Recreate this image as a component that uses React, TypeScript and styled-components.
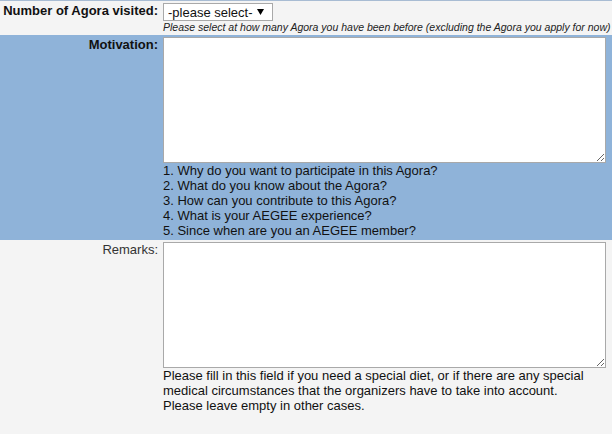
import React, { useState } from 'react';
import styled, { createGlobalStyle } from 'styled-components';

const GlobalStyle = createGlobalStyle`
    html, body {
        margin: 0;
        padding: 0;
        background: #f4f4f4;
    }
    body {
        font-family: "Liberation Sans", Arial, sans-serif;
        color: #111;
    }
`;

const StyledForm = styled.form`
    width: 612px;
    border-top: 1px solid #a8bcd3;
`;

const StyledRow = styled.div<{ $highlight?: boolean }>`
    display: grid;
    grid-template-columns: 158px 1fr;
    column-gap: 5px;
    padding: 1px 0 2px;
    background: ${(p) => (p.$highlight ? '#8fb3d9' : '#f4f4f4')};
`;

const StyledLabel = styled.label<{ $strong?: boolean }>`
    text-align: right;
    font-size: 13px;
    font-weight: ${(p) => (p.$strong ? 'bold' : 'normal')};
    color: ${(p) => (p.$strong ? '#111' : '#333')};
    padding-top: 1px;
    line-height: 16px;
    white-space: nowrap;
`;

const StyledField = styled.div`
    display: flex;
    flex-direction: column;
    align-items: flex-start;
    min-width: 0;
`;

const StyledSelect = styled.select`
    width: 110px;
    height: 18px;
    font-family: "Liberation Sans", Arial, sans-serif;
    font-size: 13px;
    color: #111;
    background: #fff;
    border: 1px solid #a9a9a9;
    padding: 0 4px;
    margin: 1px 0 0;
    appearance: none;
    background-image: url("data:image/svg+xml;utf8,<svg xmlns='http://www.w3.org/2000/svg' width='7' height='6'><path d='M0 0h7L3.5 6z' fill='black'/></svg>");
    background-repeat: no-repeat;
    background-position: right 8px center;
`;

const StyledHint = styled.div`
    font-size: 10.5px;
    font-style: italic;
    color: #222;
    line-height: 12px;
    white-space: nowrap;
`;

const StyledTextArea = styled.textarea`
    display: block;
    box-sizing: border-box;
    width: 443px;
    height: 126px;
    border: 1px solid #a9a9a9;
    background: #fff;
    font-family: "Liberation Sans", Arial, sans-serif;
    font-size: 13px;
    margin: 1px 0 0;
`;

const StyledNotes = styled.div`
    font-size: 13px;
    line-height: 15px;
    color: #111;
`;

const questions = [
    '1. Why do you want to participate in this Agora?',
    '2. What do you know about the Agora?',
    '3. How can you contribute to this Agora?',
    '4. What is your AEGEE experience?',
    '5. Since when are you an AEGEE member?',
];

const App = (): JSX.Element => {
    const [visited, setVisited] = useState<string>('');
    const [motivation, setMotivation] = useState<string>('');
    const [remarks, setRemarks] = useState<string>('');

    return (
        <>
            <GlobalStyle />
            <StyledForm onSubmit={(ev) => ev.preventDefault()}>
                <StyledRow>
                    <StyledLabel $strong htmlFor="visited">Number of Agora visited:</StyledLabel>
                    <StyledField>
                        <StyledSelect id="visited" value={visited} onChange={(ev) => setVisited(ev.target.value)}>
                            <option value="">-please select-</option>
                            <option value="0">0</option>
                            <option value="1">1</option>
                            <option value="2">2</option>
                            <option value="3">3+</option>
                        </StyledSelect>
                        <StyledHint>
                            Please select at how many Agora you have been before (excluding the Agora you apply for now)
                        </StyledHint>
                    </StyledField>
                </StyledRow>
                <StyledRow $highlight>
                    <StyledLabel $strong htmlFor="motivation">Motivation:</StyledLabel>
                    <StyledField>
                        <StyledTextArea id="motivation" value={motivation} onChange={(ev) => setMotivation(ev.target.value)} />
                        <StyledNotes>
                            {questions.map((q) => (
                                <div key={q}>{q}</div>
                            ))}
                        </StyledNotes>
                    </StyledField>
                </StyledRow>
                <StyledRow>
                    <StyledLabel htmlFor="remarks">Remarks:</StyledLabel>
                    <StyledField>
                        <StyledTextArea id="remarks" value={remarks} onChange={(ev) => setRemarks(ev.target.value)} />
                        <StyledNotes>
                            Please fill in this field if you need a special diet, or if there are any special<br />
                            medical circumstances that the organizers have to take into account.<br />
                            Please leave empty in other cases.
                        </StyledNotes>
                    </StyledField>
                </StyledRow>
            </StyledForm>
        </>
    );
};

export default App;
